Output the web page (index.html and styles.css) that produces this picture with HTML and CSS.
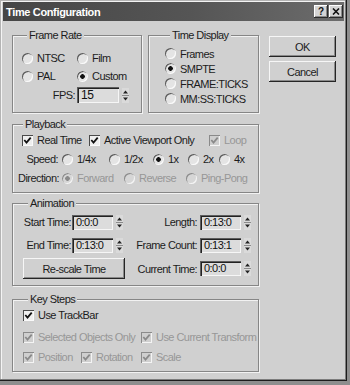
FILE: index.html
```html
<!DOCTYPE html>
<html>
<head>
<meta charset="utf-8">
<link rel="stylesheet" href="styles.css">
</head>
<body>
<div class="window">
  <div class="titlebar">
    <span class="title">Time Configuration</span>
    <div class="caps">
      <span class="cbtn">?</span>
      <span class="cbtn"><svg width="8" height="7" viewBox="0 0 8 7"><path d="M1 0.5 L7 6.5 M7 0.5 L1 6.5" stroke="#111" stroke-width="1.6"/></svg></span>
    </div>
  </div>
  <div class="content">
    <div class="toprow">
      <div class="group fr">
        <div class="legend">Frame Rate</div>
        <div class="fr-grid">
          <div class="opt"><span class="radio"></span>NTSC</div>
          <div class="opt"><span class="radio"></span>Film</div>
          <div class="opt"><span class="radio"></span>PAL</div>
          <div class="opt"><span class="radio on"></span>Custom</div>
        </div>
        <div class="fps">
          <span class="flabel fps-l">FPS:</span>
          <span class="input w42">15</span>
          <svg class="spin" width="7" height="15" viewBox="0 0 7 15"><rect width="7" height="15" fill="#dadada"/><path d="M3.5 2.5 L6 5.5 H1 Z" fill="#222"/><path d="M1 9.5 H6 L3.5 12.5 Z" fill="#222"/><path d="M0 7.5 H7" stroke="#8a8a8a"/></svg>
        </div>
      </div>
      <div class="group td">
        <div class="legend">Time Display</div>
        <div class="td-list">
          <div class="opt tdrow"><span class="radio"></span>Frames</div>
          <div class="opt tdrow"><span class="radio on"></span>SMPTE</div>
          <div class="opt tdrow"><span class="radio"></span>FRAME:TICKS</div>
          <div class="opt tdrow"><span class="radio"></span>MM:SS:TICKS</div>
        </div>
      </div>
      <div class="btns">
        <div class="btn">OK</div>
        <div class="btn">Cancel</div>
      </div>
    </div>

    <div class="group pb">
      <div class="legend">Playback</div>
      <div class="row pb-r1">
        <div class="opt w67"><span class="check"><svg viewBox="0 0 11 11"><path d="M2.3 5 L4.5 7.6 L8.7 2.6"/></svg></span>Real Time</div>
        <div class="opt w120"><span class="check"><svg viewBox="0 0 11 11"><path d="M2.3 5 L4.5 7.6 L8.7 2.6"/></svg></span>Active Viewport Only</div>
        <div class="opt dis"><span class="check"><svg viewBox="0 0 11 11"><path d="M2.3 5 L4.5 7.6 L8.7 2.6"/></svg></span>Loop</div>
      </div>
      <div class="row pb-r2">
        <span class="rlabel">Speed:</span>
        <div class="opt w47"><span class="radio"></span>1/4x</div>
        <div class="opt w44"><span class="radio"></span>1/2x</div>
        <div class="opt w35"><span class="radio on"></span>1x</div>
        <div class="opt w31"><span class="radio"></span>2x</div>
        <div class="opt"><span class="radio"></span>4x</div>
      </div>
      <div class="row pb-r3">
        <span class="rlabel">Direction:</span>
        <div class="opt w62 dis"><span class="radio on"></span>Forward</div>
        <div class="opt w62 dis"><span class="radio"></span>Reverse</div>
        <div class="opt dis"><span class="radio"></span>Ping-Pong</div>
      </div>
    </div>

    <div class="group an">
      <div class="legend">Animation</div>
      <div class="row an-r1">
        <div class="lcell field">
          <span class="flabel l48">Start Time:</span>
          <span class="input w41">0:0:0</span>
          <svg class="spin" width="7" height="15" viewBox="0 0 7 15"><rect width="7" height="15" fill="#dadada"/><path d="M3.5 2.5 L6 5.5 H1 Z" fill="#222"/><path d="M1 9.5 H6 L3.5 12.5 Z" fill="#222"/><path d="M0 7.5 H7" stroke="#8a8a8a"/></svg>
        </div>
        <div class="field">
          <span class="flabel l70">Length:</span>
          <span class="input w41">0:13:0</span>
          <svg class="spin" width="7" height="15" viewBox="0 0 7 15"><rect width="7" height="15" fill="#dadada"/><path d="M3.5 2.5 L6 5.5 H1 Z" fill="#222"/><path d="M1 9.5 H6 L3.5 12.5 Z" fill="#222"/><path d="M0 7.5 H7" stroke="#8a8a8a"/></svg>
        </div>
      </div>
      <div class="row an-r2">
        <div class="lcell field">
          <span class="flabel l48">End Time:</span>
          <span class="input w41">0:13:0</span>
          <svg class="spin" width="7" height="15" viewBox="0 0 7 15"><rect width="7" height="15" fill="#dadada"/><path d="M3.5 2.5 L6 5.5 H1 Z" fill="#222"/><path d="M1 9.5 H6 L3.5 12.5 Z" fill="#222"/><path d="M0 7.5 H7" stroke="#8a8a8a"/></svg>
        </div>
        <div class="field">
          <span class="flabel l70">Frame Count:</span>
          <span class="input w41">0:13:1</span>
          <svg class="spin" width="7" height="15" viewBox="0 0 7 15"><rect width="7" height="15" fill="#dadada"/><path d="M3.5 2.5 L6 5.5 H1 Z" fill="#222"/><path d="M1 9.5 H6 L3.5 12.5 Z" fill="#222"/><path d="M0 7.5 H7" stroke="#8a8a8a"/></svg>
        </div>
      </div>
      <div class="row an-r3">
        <div class="lcell">
          <div class="btn rescale">Re-scale Time</div>
        </div>
        <div class="field">
          <span class="flabel l70">Current Time:</span>
          <span class="input w41">0:0:0</span>
          <svg class="spin" width="7" height="15" viewBox="0 0 7 15"><rect width="7" height="15" fill="#dadada"/><path d="M3.5 2.5 L6 5.5 H1 Z" fill="#222"/><path d="M1 9.5 H6 L3.5 12.5 Z" fill="#222"/><path d="M0 7.5 H7" stroke="#8a8a8a"/></svg>
        </div>
      </div>
    </div>

    <div class="group ks">
      <div class="legend">Key Steps</div>
      <div class="row ks-r1">
        <div class="opt"><span class="check"><svg viewBox="0 0 11 11"><path d="M2.3 5 L4.5 7.6 L8.7 2.6"/></svg></span>Use TrackBar</div>
      </div>
      <div class="row ks-r2">
        <div class="opt w118 dis"><span class="check"><svg viewBox="0 0 11 11"><path d="M2.3 5 L4.5 7.6 L8.7 2.6"/></svg></span>Selected Objects Only</div>
        <div class="opt dis"><span class="check"><svg viewBox="0 0 11 11"><path d="M2.3 5 L4.5 7.6 L8.7 2.6"/></svg></span>Use Current Transform</div>
      </div>
      <div class="row ks-r3">
        <div class="opt w58 dis"><span class="check"><svg viewBox="0 0 11 11"><path d="M2.3 5 L4.5 7.6 L8.7 2.6"/></svg></span>Position</div>
        <div class="opt w60 dis"><span class="check"><svg viewBox="0 0 11 11"><path d="M2.3 5 L4.5 7.6 L8.7 2.6"/></svg></span>Rotation</div>
        <div class="opt dis"><span class="check"><svg viewBox="0 0 11 11"><path d="M2.3 5 L4.5 7.6 L8.7 2.6"/></svg></span>Scale</div>
      </div>
    </div>
  </div>
</div>
</body>
</html>
```
FILE: styles.css
```css
* { box-sizing: border-box; }

body {
  margin: 0;
  background: #8e8e8e;
  font-family: "Liberation Sans", Arial, sans-serif;
  font-size: 11px;
  letter-spacing: -0.55px;
  color: #1c1c1c;
}

.window {
  width: 347px;
  height: 381px;
  padding: 2px 3px 3px 3px;
  background: #d0d0d0;
  box-shadow: inset -1px -1px 0 #1c1c1c, inset -2px -2px 0 #7c7c7c,
              inset 1px 1px 0 #b4b4b4, inset 2px 2px 0 #f4f4f4;
  display: flex;
  flex-direction: column;
}

.titlebar {
  height: 19px;
  flex: none;
  background: linear-gradient(90deg, #464646, #555 55%, #6c6c6c);
  display: flex;
  align-items: center;
  justify-content: space-between;
  padding: 0 1px 0 3px;
}

.title {
  color: #fff;
  font-weight: bold;
  letter-spacing: -0.35px;
}

.caps { display: flex; gap: 1px; }

.cbtn {
  width: 14px;
  height: 13px;
  background: #d4d4d4;
  box-shadow: inset -1px -1px 0 #2a2a2a, inset 1px 1px 0 #fff, inset -2px -2px 0 #8a8a8a;
  display: flex;
  align-items: center;
  justify-content: center;
  font-weight: bold;
  font-size: 10px;
  letter-spacing: 0;
  color: #111;
}

.content {
  padding: 14px 0 0 9px;
  display: flex;
  flex-direction: column;
}

.toprow { display: flex; align-items: flex-start; }

.group {
  border: 1px solid #868686;
  box-shadow: 1px 1px 0 #f2f2f2, inset 1px 1px 0 #f2f2f2;
}

.legend {
  margin: -7px 0 0 5px;
  padding: 0 2px;
  background: #d0d0d0;
  width: max-content;
  height: 12px;
  line-height: 12px;
}

.opt {
  display: flex;
  align-items: center;
  height: 14px;
  white-space: nowrap;
  flex: none;
}

.radio {
  width: 11px;
  height: 11px;
  margin-right: 4px;
  border-radius: 50%;
  background: #e4e4e4;
  box-shadow: inset 1px 1px 0 #5a5a5a, inset -1px -1px 0 #fafafa;
  flex: none;
}
.radio.on {
  background: radial-gradient(circle, #111 0 2px, transparent 2.6px), #e4e4e4;
}

.check {
  width: 11px;
  height: 11px;
  margin-right: 4px;
  background: #efefef;
  box-shadow: inset 1px 1px 0 #4a4a4a, inset -1px -1px 0 #fafafa;
  flex: none;
  display: flex;
}
.check svg { width: 11px; height: 11px; }
.check path { fill: none; stroke: #111; stroke-width: 1.8; }

.dis { color: #979797; }
.dis .check { background: #cfcfcf; box-shadow: inset 1px 1px 0 #8a8a8a, inset -1px -1px 0 #f4f4f4; }
.dis .check path { stroke: #8a8a8a; }
.dis .radio { background: #d6d6d6; box-shadow: inset 1px 1px 0 #8c8c8c, inset -1px -1px 0 #f4f4f4; }
.dis .radio.on { background: radial-gradient(circle, #8a8a8a 0 2px, transparent 2.6px), #d6d6d6; }

/* Frame rate */
.fr { width: 130px; height: 78px; padding-left: 9px; }
.fr-grid {
  display: grid;
  grid-template-columns: 55px auto;
  row-gap: 4px;
  margin-top: 10px;
}
.fps {
  display: flex;
  align-items: center;
  height: 16px;
  margin-top: 4px;
}
.flabel { text-align: right; flex: none; white-space: nowrap; }
.fps-l { width: 53px; margin-right: 2px; }

.input {
  height: 16px;
  line-height: 16px;
  padding-left: 4px;
  background: #dcdcdc;
  color: #111;
  box-shadow: inset 1px 1px 0 #5e5e5e, inset 2px 2px 0 #222, inset -1px -1px 0 #f6f6f6;
  flex: none;
}
.w42 { width: 42px; font-size: 12px; letter-spacing: -0.3px; }
.w41 { width: 41px; height: 15px; line-height: 15px; }
.spin { margin-left: 3px; flex: none; display: block; }

/* Time display */
.td { width: 111px; height: 78px; margin-left: 6px; padding-left: 16px; }
.td-list { margin-top: 5px; }
.tdrow { height: 15px; }

/* Buttons */
.btns {
  margin-left: 10px;
  margin-top: 1px;
  display: flex;
  flex-direction: column;
  gap: 4px;
}
.btn {
  width: 67px;
  height: 21px;
  display: flex;
  align-items: center;
  justify-content: center;
  background: #d0d0d0;
  box-shadow: inset -1px -1px 0 #262626, inset 1px 1px 0 #f6f6f6, inset -2px -2px 0 #8a8a8a;
}

.row { display: flex; align-items: center; }

/* Playback */
.pb { width: 247px; height: 69px; margin-top: 11px; padding-left: 5px; }
.pb-r1 { margin-top: 3px; padding-left: 4px; }
.pb-r2 { margin-top: 5px; }
.pb-r3 { margin-top: 5px; }
.rlabel { width: 40px; text-align: right; margin-right: 4px; flex: none; height: 14px; line-height: 14px; }
.w67 { width: 67px; }
.w120 { width: 120px; }
.w47 { width: 47px; }
.w44 { width: 44px; }
.w35 { width: 35px; }
.w31 { width: 31px; }
.w62 { width: 62px; }

/* Animation */
.an { width: 247px; height: 83px; margin-top: 10px; padding-left: 10px; }
.an-r1 { margin-top: 5px; height: 16px; }
.an-r2 { margin-top: 7px; height: 16px; }
.an-r3 { margin-top: 5px; height: 21px; }
.lcell { width: 104px; flex: none; }
.field { display: flex; align-items: center; }
.l48 { width: 48px; margin-right: 1px; }
.l70 { width: 70px; margin-right: 3px; }
.rescale { width: 102px; }

/* Key steps */
.ks { width: 247px; height: 73px; margin-top: 13px; padding-left: 10px; }
.ks-r1 { margin-top: 3px; }
.ks-r2 { margin-top: 8px; }
.ks-r3 { margin-top: 6px; }
.w118 { width: 118px; }
.w58 { width: 58px; }
.w60 { width: 60px; }
```
